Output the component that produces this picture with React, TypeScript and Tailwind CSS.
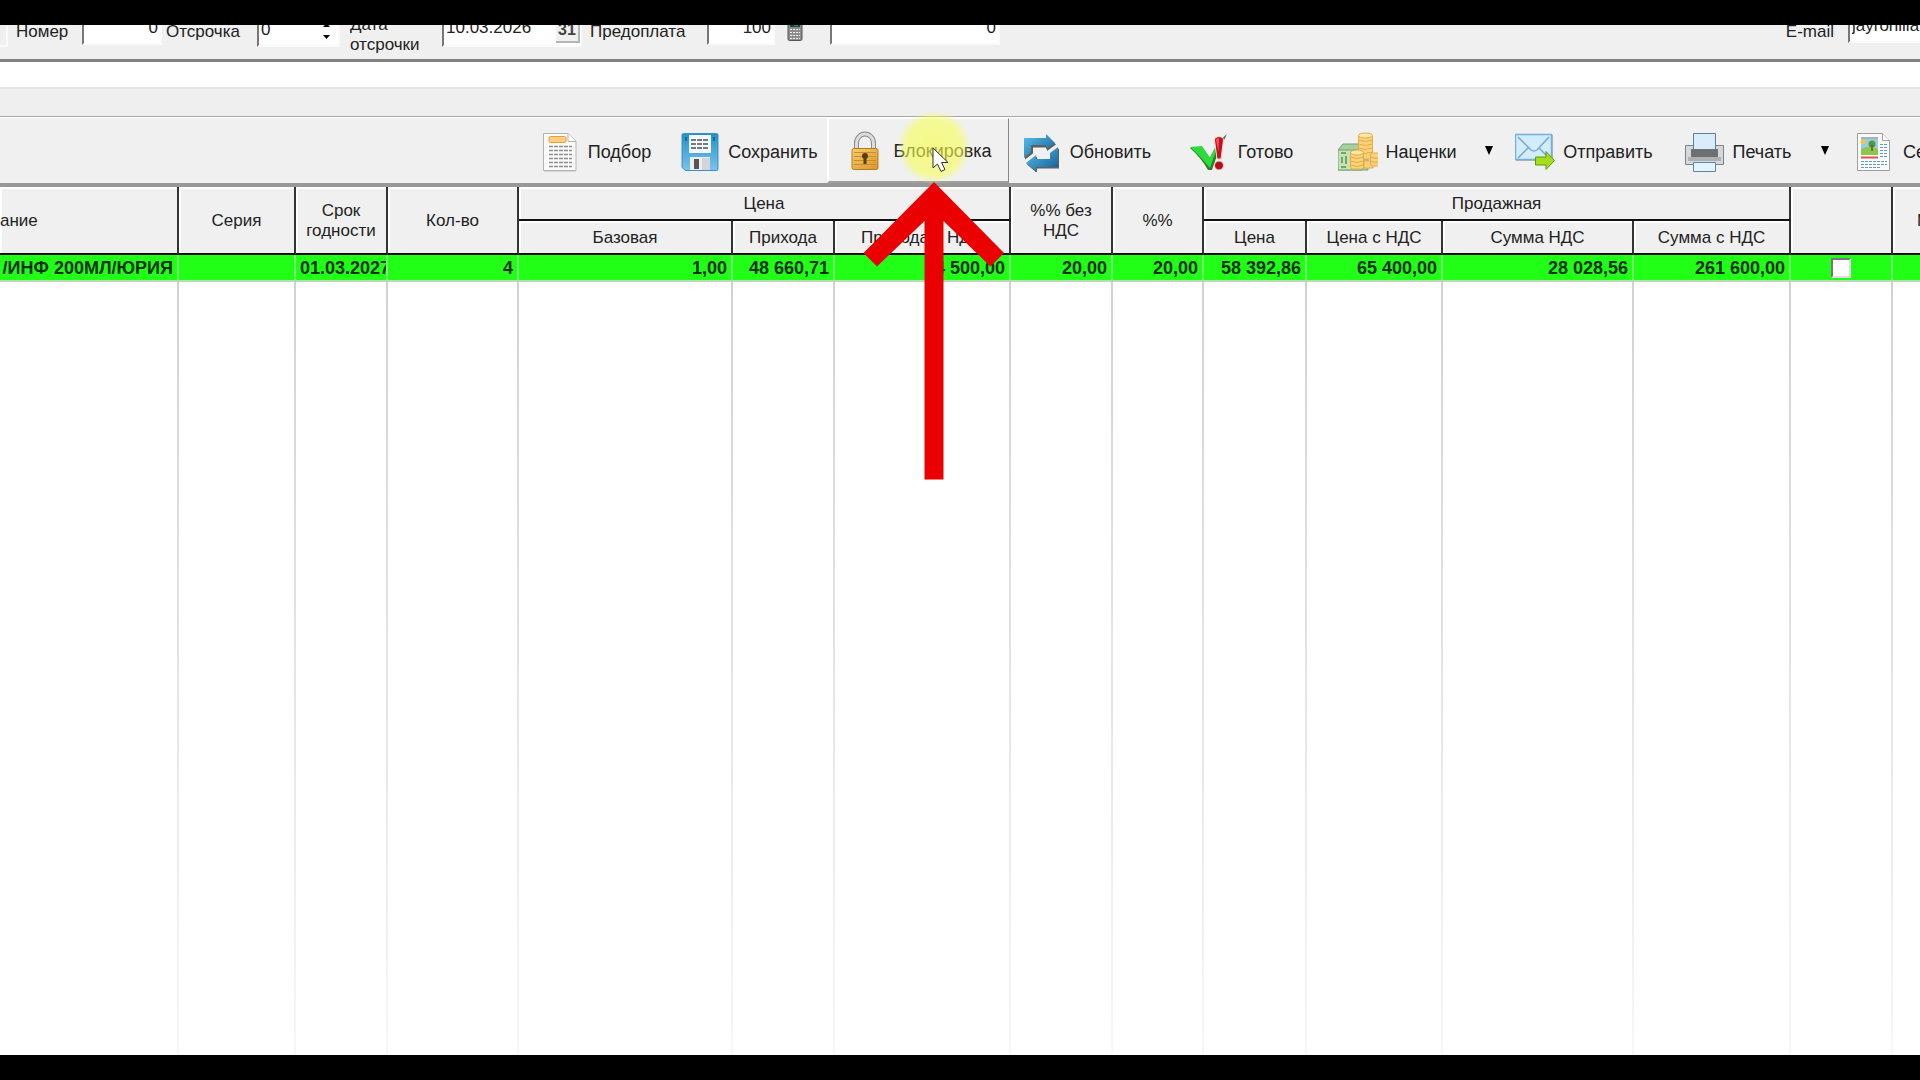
import type { ReactNode } from 'react';

const PodborIcon = () => (
  <svg viewBox="0 0 40 40" className="size-10 shrink-0" aria-hidden="true">
    <path d="M4 2h25l7 7v30.500H4z" fill="#8b8b8b" opacity=".5" />
    <path d="M3.500 1.500h24.500l8 8v29H3.500z" fill="#fafafa" stroke="#b3b3b3" />
    <path d="M28 1.500v8h8" fill="#fff" stroke="#b3b3b3" />
    <rect x="9" y="4.500" width="17" height="6" rx="1.500" fill="#ffcf87" stroke="#ee9c2e" />
    <path d="M9 14.500h23M9 18.500h23M9 22.500h23M9 26.500h23M9 30.500h23M9 34.500h23" stroke="#8f8f8f" strokeWidth="1.500" strokeDasharray="4 1" />
  </svg>
);

const SaveIcon = () => (
  <svg viewBox="0 0 40 40" className="size-10 shrink-0" aria-hidden="true">
    <defs>
      <linearGradient id="disk" x1="0" y1="0" x2="0" y2="1">
        <stop offset="0" stopColor="#1e93c8" />
        <stop offset="1" stopColor="#7cc3ec" />
      </linearGradient>
    </defs>
    <path d="M2 3q0-1.500 1.500-1.500h33q1.500 0 1.500 1.500v34q0 1.500-1.500 1.500H5.500L2 35.500z" fill="url(#disk)" stroke="#3c8fc0" />
    <path d="M9 3h22v18H9z" fill="#f3f8fb" />
    <path d="M11 8h18M11 12h18M11 16h18" stroke="#4c5258" strokeWidth="1.500" strokeDasharray="5 1" />
    <path d="M5 5h2v4H5zM33 5h2v4h-2z" fill="#126c9c" />
    <path d="M10 25h20v13H10z" fill="#eceef0" />
    <path d="M14 27h5v10h-5z" fill="#555" />
    <path d="M22 26h8v12h-8z" fill="#d2d6da" />
  </svg>
);

const LockIcon = () => (
  <svg viewBox="0 0 40 40" className="size-10 shrink-0" aria-hidden="true">
    <defs>
      <linearGradient id="brass" x1="0" y1="0" x2="1" y2="1">
        <stop offset="0" stopColor="#f7cf6b" />
        <stop offset="1" stopColor="#d9962a" />
      </linearGradient>
    </defs>
    <path d="M11.500 19v-7a8.500 9 0 0 1 17 0v7" fill="none" stroke="#8a8a8a" strokeWidth="5" />
    <path d="M11.500 19v-7a8.500 9 0 0 1 17 0v7" fill="none" stroke="#dcdcdc" strokeWidth="3" />
    <rect x="7" y="17.500" width="26" height="21" rx="2" fill="url(#brass)" stroke="#b67a1c" />
    <path d="M9 21.500h22M9 25.500h22M9 29.500h22M9 33.500h22" stroke="#c98e2b" />
    <circle cx="20" cy="25" r="3" fill="#5b3b12" />
    <path d="M18.500 26h3v7h-3z" fill="#5b3b12" />
  </svg>
);

const RefreshIcon = () => (
  <svg viewBox="0 0 40 40" className="size-10 shrink-0" aria-hidden="true">
    <defs>
      <linearGradient id="cycle" x1="0" y1="0" x2="1" y2="1">
        <stop offset="0" stopColor="#58c3ee" />
        <stop offset="1" stopColor="#145a92" />
      </linearGradient>
    </defs>
    <g fill="#222" opacity=".7" transform="translate(1 1.500)">
      <path d="M2 6h22V2l9 9-9 6.500V14H10v6l-8 6z" />
      <path d="M36 15v20H14v4.500L4 31l10-8v4h14v-6z" />
    </g>
    <path d="M2 6h22V2l9 9-9 6.500V13H9v7l-7 6z" fill="url(#cycle)" />
    <path d="M36 15v20H14v4.500L4 31l10-8v4h14v-6z" fill="url(#cycle)" />
  </svg>
);

const ReadyIcon = () => (
  <svg viewBox="0 0 40 40" className="size-10 shrink-0" aria-hidden="true">
    <path d="M0 16l12-1 8 11C25 15 31 7 37 2c-5 10-10 20-15 36h-4C13 29 7 22 0 16z" fill="#2a7d2b" />
    <path d="M0 15l12-1 8 12c3-7 5-11 9-16l-9 26C13 28 7 21 0 15z" fill="#2bdc3c" />
    <path d="M24.500 8c0-4.500 9-4.500 9 0L31 27h-4z" fill="#c40f1d" stroke="#f3d9cf" />
    <path d="M26 8c0-2 3-2 3-1l-.5 13z" fill="#ef5560" />
    <circle cx="29" cy="33.500" r="4.500" fill="#b60d1b" stroke="#f3d9cf" />
  </svg>
);

const MoneyIcon = () => (
  <svg viewBox="0 0 40 40" className="size-10 shrink-0" aria-hidden="true">
    <path d="M0 18l5-6h25v26H0z" fill="#a9cf9c" stroke="#6fa568" />
    <path d="M0 18h24v20H0z" fill="#c6e2b5" stroke="#6fa568" />
    <path d="M3 21h5M3 35h5M4 25v6M8 24v8" stroke="#5b9256" strokeWidth="1.500" />
    <g fill="#fbd376" stroke="#e3a94e">
      <rect x="20.500" y="3" width="14" height="24" rx="2" />
      <ellipse cx="27.500" cy="3.500" rx="7" ry="2.500" fill="#ffe9a6" />
      <path d="M20.500 8q7 3 14 0M20.500 12q7 3 14 0M20.500 16q7 3 14 0M20.500 20q7 3 14 0" />
      <path d="M26 29h9v7h-9z" />
      <rect x="12.500" y="20" width="13" height="17" rx="2" />
      <ellipse cx="19" cy="20.500" rx="6.500" ry="2.500" fill="#ffe9a6" />
      <path d="M12.500 25q6.500 3 13 0M12.500 29q6.500 3 13 0M12.500 33q6.500 3 13 0" />
      <rect x="32.500" y="21" width="9" height="13" rx="2" />
      <path d="M32.500 25q4 2 8 1M32.500 29q4 2 8 1" />
    </g>
  </svg>
);

const SendIcon = () => (
  <svg viewBox="0 0 40 40" className="size-10 shrink-0" aria-hidden="true">
    <path d="M1 3h37v26H1z" fill="#777" opacity=".5" />
    <path d="M.5 2.500h36v25H.5z" fill="#d3ecfb" stroke="#71b1dc" strokeWidth="1.500" />
    <path d="M3 5l13 13q3 2 6 0L34 5M3 26l10-10M34 26L24 16" fill="none" stroke="#75a9cb" strokeWidth="1.500" />
    <path d="M20.500 25H31v-5.500l8.500 9L31 37.500V33H20.500z" fill="#a5dc1b" stroke="#5d9a12" />
  </svg>
);

const PrintIcon = () => (
  <svg viewBox="0 0 40 40" className="size-10 shrink-0" aria-hidden="true">
    <path d="M.5 13.500h38v19H.5z" fill="#d5d7d9" stroke="#7f8386" />
    <path d="M8.500 1.500h22v16h-22z" fill="#d9ecfb" stroke="#5f7d97" />
    <path d="M6 17h27v8H6z" fill="#6d7073" />
    <path d="M3 25h33v4H3z" fill="#aeb1b3" />
    <path d="M8.500 30.500h22v9h-22z" fill="#e5f3ff" stroke="#5c87ad" />
  </svg>
);

const CertificateIcon = () => (
  <svg viewBox="0 0 40 40" className="size-10 shrink-0" aria-hidden="true">
    <path d="M2.500 1.500h25l7 7v30h-32z" fill="#fbfbfb" stroke="#9f9f9f" />
    <path d="M27.500 1.500v7h7" fill="#fff" stroke="#9f9f9f" />
    <path d="M6 7h17v10H6z" fill="#92cdf3" />
    <path d="M6 17q8-4 17 0v6H6z" fill="#8dc64a" />
    <circle cx="8" cy="10" r="2.500" fill="#f8c73c" />
    <circle cx="17" cy="12" r="3.500" fill="#4f9c35" />
    <path d="M17 13v6" stroke="#76501e" strokeWidth="1.500" />
    <path d="M6 6h17" stroke="#666" />
    <path d="M6 25.500h17" stroke="#e0504f" strokeWidth="2" />
    <path d="M25 12.500h7M25 15.500h7M25 18.500h7M25 21.500h7M25 24.500h7M6 29.500h26M6 32.500h26M6 35.500h20" stroke="#5c9ccb" strokeDasharray="3 1" />
  </svg>
);

const CalculatorIcon = () => (
  <svg viewBox="0 0 16 26" className="h-[26px] w-4" aria-hidden="true">
    <rect x="1" y=".5" width="14" height="24" rx="1.500" fill="#8d8d8d" stroke="#555" />
    <path d="M3 3h10v8H3z" fill="#174b3b" />
    <path d="M7 9h4" stroke="#33d29a" />
    <path d="M3 13.500h10M3 16.500h10M3 19.500h10M3 22.500h10" stroke="#eee" strokeDasharray="2 1" />
  </svg>
);

type ToolButtonProps = {
  icon: ReactNode;
  label: string;
  className: string;
};

const ToolButton = ({ icon, label, className }: ToolButtonProps) => (
  <button type="button" className={`flex shrink-0 items-center gap-2 whitespace-nowrap ${className}`}>
    {icon}
    {label}
  </button>
);

const DropButton = ({ label }: { label: string }) => (
  <button type="button" aria-label={label} className="flex w-7 shrink-0 items-center justify-center">
    <svg viewBox="0 0 8 9" className="h-[9px] w-2" aria-hidden="true">
      <path d="M0 0h8L4 9z" fill="#000" />
    </svg>
  </button>
);

const Pointer = () => (
  <>
    <div className="pointer-events-none absolute -top-2 left-[70px] z-10 size-[74px] rounded-full bg-[radial-gradient(closest-side,rgba(248,255,70,0.62)_0%,rgba(248,255,90,0.6)_75%,rgba(250,255,140,0)_100%)]" />
    <svg viewBox="0 0 142 300" className="pointer-events-none absolute top-16 left-9 z-10 h-[300px] w-[142px]" aria-hidden="true">
      <path d="M71 0l70 71-13.500 13.500L80.500 39v258.500h-19V39L14 84.500.5 71z" fill="#ea0000" />
    </svg>
    <svg viewBox="0 0 18 26" className="pointer-events-none absolute top-[29px] left-[105px] z-20 h-[26px] w-[18px]" aria-hidden="true">
      <path d="M1 1v20l4.500-4 3.500 7.500 4-2-3.500-7H16z" fill="#fff" stroke="#333" />
    </svg>
  </>
);

const Toolbar = () => (
  <div className="flex h-[66px] shrink-0 border-t border-white bg-[#f0f0f0] pl-[520px] text-lg text-[#222]">
    <ToolButton icon={<PodborIcon />} label="Подбор" className="w-[151px] justify-center pt-0.5" />
    <ToolButton icon={<SaveIcon />} label="Сохранить" className="w-[156px] justify-center pt-0.5" />
    <div className="relative flex shrink-0">
      <ToolButton
        icon={<LockIcon />}
        label="Блокировка"
        className="w-[182px] justify-center border-t border-r border-b-2 border-l-2 border-t-white border-r-[#8a8a8a] border-b-[#a0a0a0] border-l-white pt-0.5"
      />
      <Pointer />
    </div>
    <ToolButton icon={<RefreshIcon />} label="Обновить" className="w-[155px] justify-center pt-0.5" />
    <ToolButton icon={<ReadyIcon />} label="Готово" className="w-[155px] justify-center pt-0.5" />
    <ToolButton icon={<MoneyIcon />} label="Наценки" className="w-[156px] justify-center pt-0.5" />
    <DropButton label="Наценки: меню" />
    <ToolButton icon={<SendIcon />} label="Отправить" className="w-[162px] justify-center pt-0.5" />
    <ToolButton icon={<PrintIcon />} label="Печать" className="w-[146px] justify-center pt-0.5" />
    <DropButton label="Печать: меню" />
    <ToolButton icon={<CertificateIcon />} label="Сертификат" className="pt-0.5 pl-4" />
  </div>
);

const field =
  'border-t border-r-2 border-b-2 border-l-2 border-t-[#808080] border-r-[#fafafa] border-b-[#fafafa] border-l-[#777] bg-white text-[17px] text-[#222] outline-none';

const DocumentForm = () => (
  <form className="flex h-[34px] shrink-0 items-end overflow-hidden bg-[#f0f0f0] text-[17px] leading-5 text-[#222]">
    <div className="mb-3 h-8 w-2 shrink-0 border-r-2 border-b-2 border-[#fafafa] bg-[#f0f0f0]" />
    <label htmlFor="number" className="mb-[17px] w-[74px] shrink-0 pl-2">Номер</label>
    <input id="number" defaultValue="0" className={`mb-3.5 h-[34px] w-20 shrink-0 pr-0.5 text-right ${field}`} />
    <label htmlFor="delay" className="mb-[17px] w-[95px] shrink-0 pl-1">Отсрочка</label>
    <div className={`mb-3 flex h-[34px] w-[83px] shrink-0 ${field}`}>
      <input id="delay" defaultValue="0" className="w-14 pl-0.5 outline-none" />
      <div className="flex flex-1 flex-col items-center justify-end gap-2 pb-1.5">
        <svg viewBox="0 0 7 4" className="h-1 w-[7px]" aria-hidden="true"><path d="M0 4h7L3.500 0z" /></svg>
        <svg viewBox="0 0 7 4" className="h-1 w-[7px]" aria-hidden="true"><path d="M0 0h7L3.500 4z" /></svg>
      </div>
    </div>
    <label htmlFor="delay-date" className="mb-1 w-[102px] shrink-0 pl-2.5">
      Дата
      <br />
      отсрочки
    </label>
    <div className={`mb-3 flex h-[38px] w-[140px] shrink-0 items-end justify-between ${field}`}>
      <input id="delay-date" defaultValue="10.03.2026" className="h-[35px] w-[104px] pl-0.5 outline-none" />
      <button type="button" className="mb-0.5 h-6 w-6 border-r-2 border-b-2 border-[#b5b5b5] bg-[#f0f0f0] text-base leading-5 font-bold text-[#444]">31</button>
    </div>
    <label htmlFor="prepay" className="mb-[17px] w-[125px] shrink-0 pl-2">Предоплата</label>
    <input id="prepay" defaultValue="100" className={`mb-3.5 h-[34px] w-[68px] shrink-0 pr-0.5 text-right ${field}`} />
    <button type="button" aria-label="Калькулятор" className="mb-[17px] ml-3 shrink-0">
      <CalculatorIcon />
    </button>
    <input aria-label="Сумма предоплаты" defaultValue="0" className={`mb-3.5 ml-[27px] h-[34px] w-[170px] shrink-0 pr-0.5 text-right ${field}`} />
    <label htmlFor="email" className="mb-[17px] ml-auto shrink-0 pr-3.5">E-mail</label>
    <input id="email" defaultValue="jayronilla" className={`mb-4 -mr-8 h-[34px] w-[104px] shrink-0 pl-0.5 ${field}`} />
  </form>
);

const row = [
  '/ИНФ 200МЛ/ЮРИЯ',
  '',
  '01.03.2027',
  '4',
  '1,00',
  '48 660,71',
  '54 500,00',
  '20,00',
  '20,00',
  '58 392,86',
  '65 400,00',
  '28 028,56',
  '261 600,00',
];

const th =
  'border-r-2 border-b-2 border-r-[#333] border-b-[#111] p-0 pt-0.5 font-normal shadow-[inset_2px_2px_0_#fff]';

const InvoiceTable = () => (
  <table className="h-full w-full table-fixed border-separate border-spacing-0">
    <colgroup>
      <col className="w-[179px]" />
      <col className="w-[117px]" />
      <col className="w-[92px]" />
      <col className="w-[131px]" />
      <col className="w-[214px]" />
      <col className="w-[102px]" />
      <col className="w-[176px]" />
      <col className="w-[102px]" />
      <col className="w-[91px]" />
      <col className="w-[103px]" />
      <col className="w-[136px]" />
      <col className="w-[191px]" />
      <col className="w-[157px]" />
      <col className="w-[102px]" />
      <col />
    </colgroup>
    <thead className="bg-[#f0f0f0] text-[17px] leading-5 text-[#222]">
      <tr className="h-[34px]">
        <th rowSpan={2} className={`text-left ${th}`}>ание</th>
        <th rowSpan={2} className={th}>Серия</th>
        <th rowSpan={2} className={th}>Срок годности</th>
        <th rowSpan={2} className={th}>Кол-во</th>
        <th colSpan={3} className={th}>Цена</th>
        <th rowSpan={2} className={th}>%% без<br />НДС</th>
        <th rowSpan={2} className={th}>%%</th>
        <th colSpan={4} className={th}>Продажная</th>
        <th rowSpan={2} className={th} />
        <th rowSpan={2} className="overflow-hidden border-b-2 border-[#111] p-0 pt-0.5 pl-6 text-left font-normal whitespace-nowrap shadow-[inset_2px_2px_0_#fff]">
          Марка
        </th>
      </tr>
      <tr className="h-[34px]">
        <th className={th}>Базовая</th>
        <th className={th}>Прихода</th>
        <th className={th}>Прихода с НДС</th>
        <th className={th}>Цена</th>
        <th className={th}>Цена с НДС</th>
        <th className={th}>Сумма НДС</th>
        <th className={th}>Сумма с НДС</th>
      </tr>
    </thead>
    <tbody>
      <tr className="h-[27px] bg-[#21ff16] text-lg leading-6 font-bold text-[#06300a]">
        {row.map((value, i) => (
          <td key={i} className="overflow-hidden border-r-2 border-b-2 border-r-[#76f870] border-b-[#b5dcb3] p-0 whitespace-nowrap">
            <div className={`flex px-1 pt-px leading-6 ${i === 2 ? 'justify-start' : 'justify-end'}`}>{value}</div>
          </td>
        ))}
        <td className="border-r-2 border-b-2 border-r-[#76f870] border-b-[#b5dcb3] p-0">
          <input
            type="checkbox"
            aria-label="Отметка"
            className="mx-auto block size-5 appearance-none border-2 border-t-[#777] border-r-[#ddd] border-b-[#ddd] border-l-[#777] bg-white"
          />
        </td>
        <td className="border-b-2 border-b-[#b5dcb3] p-0" />
      </tr>
      <tr>
        {Array.from({ length: 14 }, (_, i) => (
          <td key={i} className="bg-[linear-gradient(to_bottom,#d2d2d2,#f7f7f7)] bg-[length:2px_100%] bg-right bg-no-repeat p-0" />
        ))}
        <td className="p-0" />
      </tr>
    </tbody>
  </table>
);

const App = () => (
  <div className="flex h-screen flex-col overflow-hidden border-y-[25px] border-black bg-white font-['Liberation_Sans',Arial,sans-serif]">
    <DocumentForm />
    <div className="h-[30px] shrink-0 border-t-[3px] border-b-2 border-t-[#808080] border-b-[#e6e6e6] bg-white" />
    <div className="h-7 shrink-0 border-b border-[#a8a8a8] bg-[#efefef]" />
    <Toolbar />
    <div className="h-1 shrink-0 bg-[#989898]" />
    <div className="min-h-0 flex-1">
      <InvoiceTable />
    </div>
  </div>
);

export default App;
